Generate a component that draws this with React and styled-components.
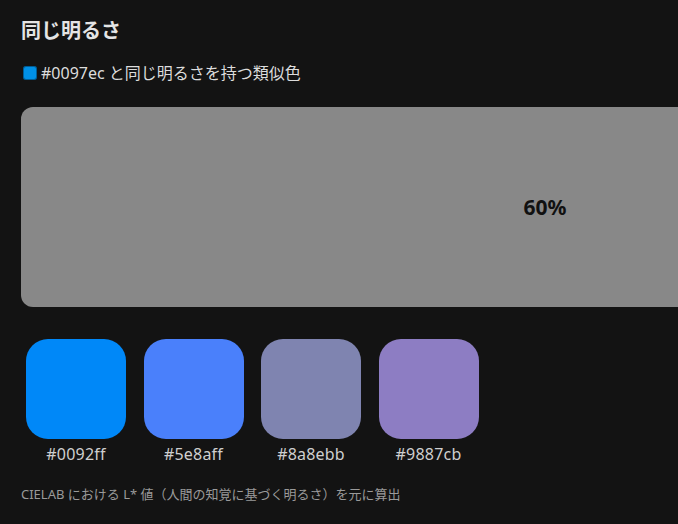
import React from 'react';
import styled, { createGlobalStyle } from 'styled-components';

const GlobalStyle = createGlobalStyle`
    html, body {
        margin: 0;
        padding: 0;
        background: #131313;
        overflow: hidden;
    }
    body {
        font-family: "Noto Sans", "Noto Sans CJK JP", sans-serif;
        color: #e6e6e6;
    }
`

const Page = styled.div`
    padding: 16px 21px 0 21px;
    width: 1100px;
`

const Title = styled.h2`
    margin: 0;
    font-size: 20px;
    line-height: 30px;
    font-weight: 700;
    color: #e4e4e4;
`

const Subtitle = styled.div`
    display: flex;
    align-items: center;
    gap: 4px;
    margin-top: 16px;
    font-size: 16px;
    line-height: 22px;
    color: #dcdcdc;
`

const Chip = styled.span`
    width: 14px;
    height: 14px;
    margin-left: 2px;
    border-radius: 3px;
    background: ${p => p.color};
    box-shadow: inset 0 0 0 1px rgba(0, 0, 0, 0.35);
`

const Preview = styled.div`
    margin-top: 23px;
    width: 1048px;
    height: 200px;
    border-radius: 12px;
    background: ${p => p.color};
    display: flex;
    align-items: center;
    justify-content: center;
    font-size: 21px;
    font-weight: 700;
    color: #111;
`

const Swatches = styled.div`
    display: flex;
    gap: 17.5px;
    margin-top: 32px;
    padding-left: 5px;
`

const Item = styled.div`
    display: flex;
    flex-direction: column;
    align-items: center;
    width: 100px;
`

const Swatch = styled.div`
    width: 100px;
    height: 100px;
    border-radius: 22px;
    background: ${p => p.color};
`

const Hex = styled.div`
    margin-top: 4px;
    font-size: 16px;
    line-height: 22px;
    color: #cfcfcf;
    letter-spacing: 0.2px;
`

const Note = styled.p`
    margin: 20px 0 0;
    font-size: 13px;
    line-height: 18px;
    color: #9a9a9a;
`

const swatches = [
    { hex: '#0092ff', shown: '#0088f8' },
    { hex: '#5e8aff', shown: '#4a80fb' },
    { hex: '#8a8ebb', shown: '#7f84b0' },
    { hex: '#9887cb', shown: '#8d7dc3' },
];

export default function App() {
    return (
        <>
            <GlobalStyle />
            <Page>
                <Title>同じ明るさ</Title>
                <Subtitle>
                    <Chip color="#0090e6" />
                    <span>#0097ec と同じ明るさを持つ類似色</span>
                </Subtitle>
                <Preview color="#888888">60%</Preview>
                <Swatches>
                    {swatches.map(s => (
                        <Item key={s.hex}>
                            <Swatch color={s.shown} />
                            <Hex>{s.hex}</Hex>
                        </Item>
                    ))}
                </Swatches>
                <Note>CIELAB における L* 値（人間の知覚に基づく明るさ）を元に算出</Note>
            </Page>
        </>
    );
}
